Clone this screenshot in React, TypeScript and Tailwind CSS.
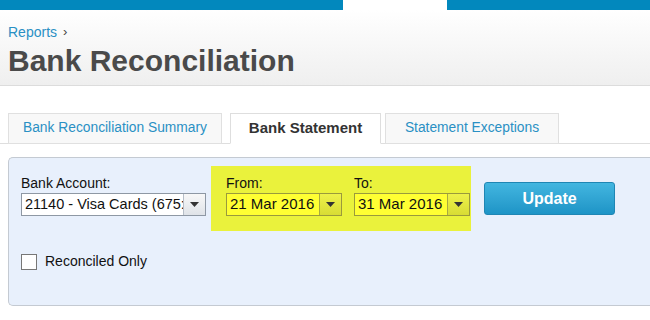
const Caret = () => (
  <svg width="9" height="5" viewBox="0 0 9 5">
    <path d="M0 0h9L4.5 5z" fill="#333" />
  </svg>
);

const DateBox = ({ value }: { value: string }) => (
  <div className="flex h-[23px] w-[116px] border border-[#9a9a3c] bg-[#ffff33]">
    <div className="flex flex-1 items-center pl-[3px] text-[15px] text-[#111]">{value}</div>
    <div className="flex w-[22px] items-center justify-center border-l border-[#a8aa40] bg-gradient-to-b from-[#eef24a] to-[#d8dc34]">
      <Caret />
    </div>
  </div>
);

const App = () => {
  return (
    <div className="h-[320px] w-[650px] overflow-hidden bg-white font-['Liberation_Sans',Arial,sans-serif]">
      {/* top bar */}
      <div className="flex h-[10px]">
        <div className="w-[343px] bg-[#0288bd]" />
        <div className="w-[104px] bg-white" />
        <div className="flex-1 bg-[#0288bd]" />
      </div>

      {/* page header */}
      <div className="h-[76px] border-b border-[#dcdcdc] bg-gradient-to-b from-white to-[#efefef] px-[8px] pt-[13px]">
        <div className="flex items-center gap-[6px] text-[14px] leading-[18px] text-[#2a90c4]">
          <span>Reports</span>
          <span className="text-[13px] text-[#444]">›</span>
        </div>
        <h1 className="mt-[3px] text-[30px] font-bold leading-[34px] text-[#4a4a4a]">Bank Reconciliation</h1>
      </div>

      {/* tabs */}
      <div className="mt-[27px] flex gap-[8px] border-b border-[#dedede] pl-[8px]">
        <div className="-mb-px flex h-[31px] w-[214px] items-center justify-center border border-[#e0e0e0] bg-[#f8f8f8] text-[13.8px] text-[#2a90c4]">
          Bank Reconciliation Summary
        </div>
        <div className="-mb-px flex h-[31px] w-[151px] items-center justify-center border border-b-white border-[#dedede] bg-white text-[15px] font-bold text-[#333]">
          Bank Statement
        </div>
        <div className="-mb-px -ml-[4px] flex h-[31px] w-[174px] items-center justify-center border border-[#e0e0e0] bg-[#f8f8f8] text-[13.8px] text-[#2a90c4]">
          Statement Exceptions
        </div>
      </div>

      {/* filter panel */}
      <div className="ml-[8px] mt-[13px] h-[149px] rounded-l-[5px] border border-r-0 border-[#c4cad2] bg-[#e8f0fc] pl-[12px] pt-[8px]">
        <div className="flex items-start">
          <div className="pt-[9px]">
            <div className="text-[14px] leading-[17px] text-[#111]">Bank Account:</div>
            <div className="mt-[1px] flex h-[23px] w-[185px] border border-[#8e98a4] bg-white">
              <div className="w-[161px] whitespace-nowrap pl-[3px] text-[14.5px] leading-[21px] text-[#111]">
                21140 - Visa Cards (675:
              </div>
              <div className="flex w-[22px] items-center justify-center border-l border-[#b6bec8] bg-gradient-to-b from-[#f8f8f8] to-[#dfe3e8]">
                <Caret />
              </div>
            </div>
          </div>

          <div className="ml-[5px] flex h-[65px] gap-[12px] bg-[#eaf23c] pl-[15px] pr-[1px] pt-[9px]">
            <div>
              <div className="text-[14px] leading-[17px] text-[#111]">From:</div>
              <div className="mt-[1px]">
                <DateBox value="21 Mar 2016" />
              </div>
            </div>
            <div>
              <div className="text-[14px] leading-[17px] text-[#111]">To:</div>
              <div className="mt-[1px]">
                <DateBox value="31 Mar 2016" />
              </div>
            </div>
          </div>

          <button className="ml-[13px] mt-[16px] flex h-[33px] w-[131px] items-center justify-center rounded-[3px] border border-[#1f86b4] bg-gradient-to-b from-[#42b6e0] to-[#1d94c6] text-[16px] font-bold text-white">
            Update
          </button>
        </div>

        <label className="mt-[20px] flex items-center gap-[8px]">
          <span className="h-[16px] w-[16px] border border-[#777] bg-white" />
          <span className="text-[14px] text-[#111]">Reconciled Only</span>
        </label>
      </div>
    </div>
  );
};

export default App;
